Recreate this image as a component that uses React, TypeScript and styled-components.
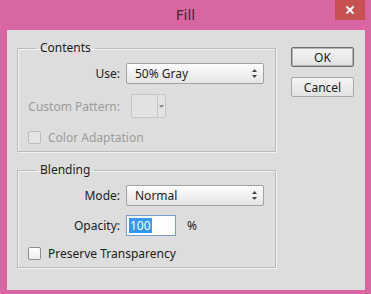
import styled, { createGlobalStyle } from "styled-components";

const GlobalStyle = createGlobalStyle`
	html, body {
		margin: 0;
		padding: 0;
		background: #d766a1;
	}
	body {
		font-family: "Noto Sans", "Open Sans", sans-serif;
		font-size: 12px;
		color: #1c1c1c;
	}
`

const Window = styled.div`
	width: 371px;
	height: 294px;
	display: flex;
	flex-direction: column;
	background: #d766a1;
	box-sizing: border-box;
`

const TitleBar = styled.div`
	height: 30px;
	display: grid;
	grid-template-columns: 1fr auto 1fr;
	align-items: start;
`

const Title = styled.div`
	grid-column: 2;
	font-size: 15px;
	line-height: 29px;
	color: #43263a;
`

const CloseButton = styled.div`
	grid-column: 3;
	justify-self: end;
	width: 30px;
	height: 20px;
	margin-right: 6px;
	background: #c75151;
	display: flex;
	align-items: center;
	justify-content: center;
`

const Client = styled.div`
	flex: 1;
	margin: 0 6px 4px 7px;
	background: #dddddd;
	display: flex;
	gap: 15px;
	padding: 10px 0 0 10px;
`

const LeftColumn = styled.div`
	width: 259px;
	display: flex;
	flex-direction: column;
	gap: 10px;
`

const Group = styled.fieldset`
	margin: 0;
	min-width: 0;
	padding: 0 10px 6px 10px;
	border: 1px solid #bababa;
	box-shadow: 1px 1px 0 #f2f2f2, inset 1px 1px 0 #f2f2f2;
	display: flex;
	flex-direction: column;
`

const Legend = styled.legend`
	margin-left: 8px;
	padding: 0 4px;
	font-size: 12px;
	line-height: 16px;
	color: #1c1c1c;
`

const Field = styled.div<{ $top: number; $h: number }>`
	display: grid;
	grid-template-columns: 92px 1fr;
	column-gap: 6px;
	align-items: center;
	height: ${p => p.$h}px;
	margin-top: ${p => p.$top}px;
`

const Label = styled.span<{ $disabled?: boolean }>`
	text-align: right;
	white-space: nowrap;
	color: ${p => (p.$disabled ? "#9c9c9c" : "#1c1c1c")};
`

const Select = styled.div`
	width: 138px;
	height: 21px;
	box-sizing: border-box;
	border: 1px solid #a2a2a2;
	border-radius: 2px;
	background: linear-gradient(#fefefe, #e4e4e4);
	display: flex;
	align-items: center;
	justify-content: space-between;
	padding: 0 5px 0 8px;
`

const PatternBox = styled.div`
	margin-left: 5px;
	width: 35px;
	height: 24px;
	box-sizing: border-box;
	border: 1px solid #c6c6c6;
	border-radius: 2px;
	background: #e2e2e2;
	display: flex;
`

const PatternSwatch = styled.div`
	flex: 1;
	border-right: 1px solid #c6c6c6;
`

const PatternArrow = styled.div`
	width: 7px;
	display: flex;
	align-items: center;
	justify-content: center;
`

const InputRow = styled.div`
	display: flex;
	align-items: center;
	gap: 11px;
`

const NumberInput = styled.div`
	width: 50px;
	height: 21px;
	box-sizing: border-box;
	border: 1px solid #7b9fcb;
	background: #ffffff;
	display: flex;
	align-items: center;
	padding-left: 2px;
`

const Selected = styled.span`
	background: #3399ff;
	color: #ffffff;
	line-height: 15px;
	padding: 0 1px;
`

const CheckRow = styled.label<{ $disabled?: boolean; $top: number }>`
	display: flex;
	align-items: center;
	gap: 7px;
	height: 16px;
	margin-top: ${p => p.$top}px;
	color: ${p => (p.$disabled ? "#9c9c9c" : "#1c1c1c")};
`

const Box = styled.span<{ $disabled?: boolean }>`
	width: 13px;
	height: 13px;
	box-sizing: border-box;
	border: 1px solid ${p => (p.$disabled ? "#bdbdbd" : "#8e8e8e")};
	border-radius: 2px;
	background: ${p => (p.$disabled ? "#e4e4e4" : "linear-gradient(#ffffff, #ececec)")};
`

const RightColumn = styled.div`
	display: flex;
	flex-direction: column;
	gap: 10px;
	margin-top: 7px;
`

const Button = styled.div<{ $default?: boolean }>`
	width: 63px;
	height: 20px;
	box-sizing: border-box;
	border: 1px solid ${p => (p.$default ? "#6e6e6e" : "#a9a9a9")};
	box-shadow: ${p => (p.$default ? "inset 0 0 0 1px #b4b4b4" : "none")};
	border-radius: 2px;
	background: linear-gradient(#f4f4f4, #e2e2e2);
	display: flex;
	align-items: center;
	justify-content: center;
`

const Spinner = () => (
	<svg width="7" height="11" viewBox="0 0 7 11">
		<path d="M3.5 1 L6 4 L1 4 Z" fill="#444" />
		<path d="M3.5 10 L6 7 L1 7 Z" fill="#444" />
	</svg>
);

const App = () => {
	return (
		<Window>
			<GlobalStyle />
			<TitleBar>
				<Title>Fill</Title>
				<CloseButton>
					<svg width="10" height="10" viewBox="0 0 10 10">
						<path d="M1.5 1.5 L8.5 8.5 M8.5 1.5 L1.5 8.5" stroke="#fff" strokeWidth="2" />
					</svg>
				</CloseButton>
			</TitleBar>
			<Client>
				<LeftColumn>
					<Group>
						<Legend>Contents</Legend>
						<Field $top={7} $h={21}>
							<Label>Use:</Label>
							<Select>
								<span>50% Gray</span>
								<Spinner />
							</Select>
						</Field>
						<Field $top={10} $h={24}>
							<Label $disabled>Custom Pattern:</Label>
							<PatternBox>
								<PatternSwatch />
								<PatternArrow>
									<svg width="5" height="3" viewBox="0 0 5 3">
										<path d="M0 0 L5 0 L2.5 3 Z" fill="#8a8a8a" />
									</svg>
								</PatternArrow>
							</PatternBox>
						</Field>
						<CheckRow $disabled $top={11}>
							<Box $disabled />
							Color Adaptation
						</CheckRow>
					</Group>
					<Group>
						<Legend>Blending</Legend>
						<Field $top={7} $h={21}>
							<Label>Mode:</Label>
							<Select>
								<span>Normal</span>
								<Spinner />
							</Select>
						</Field>
						<Field $top={9} $h={21}>
							<Label>Opacity:</Label>
							<InputRow>
								<NumberInput>
									<Selected>100</Selected>
								</NumberInput>
								<span>%</span>
							</InputRow>
						</Field>
						<CheckRow $top={9}>
							<Box />
							Preserve Transparency
						</CheckRow>
					</Group>
				</LeftColumn>
				<RightColumn>
					<Button $default>OK</Button>
					<Button>Cancel</Button>
				</RightColumn>
			</Client>
		</Window>
	);
}

export default App;
